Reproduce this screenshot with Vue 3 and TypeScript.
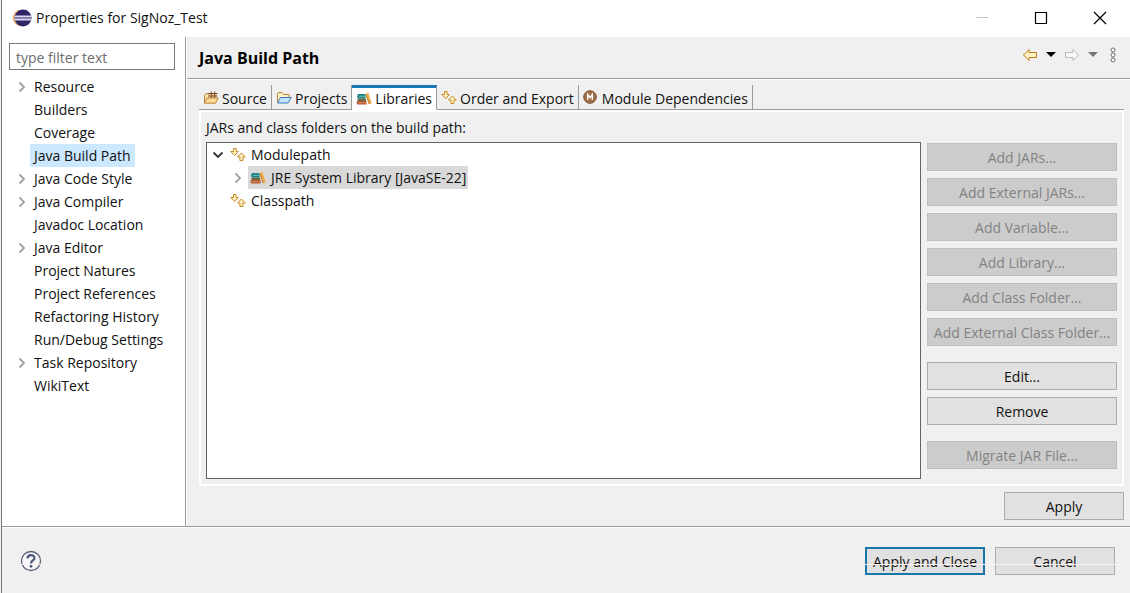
<script setup lang="ts">
import { ref } from 'vue'

interface Page { name: string; expandable?: boolean }
interface Tab { name: string; icon: string }
interface Action { label: string; disabled?: boolean; spaced?: boolean }

const pages: Page[] = [
  { name: 'Resource', expandable: true },
  { name: 'Builders' },
  { name: 'Coverage' },
  { name: 'Java Build Path' },
  { name: 'Java Code Style', expandable: true },
  { name: 'Java Compiler', expandable: true },
  { name: 'Javadoc Location' },
  { name: 'Java Editor', expandable: true },
  { name: 'Project Natures' },
  { name: 'Project References' },
  { name: 'Refactoring History' },
  { name: 'Run/Debug Settings' },
  { name: 'Task Repository', expandable: true },
  { name: 'WikiText' },
]
const tabs: Tab[] = [
  { name: 'Source', icon: 'source' },
  { name: 'Projects', icon: 'folder' },
  { name: 'Libraries', icon: 'books' },
  { name: 'Order and Export', icon: 'order' },
  { name: 'Module Dependencies', icon: 'module' },
]
const actions: Action[] = [
  { label: 'Add JARs...', disabled: true },
  { label: 'Add External JARs...', disabled: true },
  { label: 'Add Variable...', disabled: true },
  { label: 'Add Library...', disabled: true },
  { label: 'Add Class Folder...', disabled: true },
  { label: 'Add External Class Folder...', disabled: true },
  { label: 'Edit...', spaced: true },
  { label: 'Remove' },
  { label: 'Migrate JAR File...', disabled: true, spaced: true },
]
const filter = ref('')
const page = ref('Java Build Path')
const tab = ref('Libraries')
</script>

<template>
  <svg class="defs" aria-hidden="true">
    <symbol id="source" viewBox="0 0 16 16">
      <path d="M1.500 13V5.500l1.500-2h3v4" fill="#fbe6b4" stroke="#b98237" />
      <path d="M6.500 3.500h7v4h-7z" fill="#f0cfa2" />
      <path d="M8.300 1.500v6.500M11.700 1.500v6.500M5.500 3.500h9M5.500 6h9" stroke="#7d4a2e" fill="none" />
      <path d="M1.500 13.200l2.500-5.200h11.200l-2.700 5.200z" fill="#fcdc96" stroke="#bd8534" />
    </symbol>
    <symbol id="folder" viewBox="0 0 16 16">
      <path d="M1.500 12.500V4l1-1.500h3.500l1.500 2h5.500v3" fill="#fdf0c8" stroke="#b98a33" />
      <path d="M1.500 13l3-5.500h10.800l-3.300 5.500z" fill="#c4e2fa" stroke="#3f78b8" />
    </symbol>
    <symbol id="books" viewBox="0 0 16 16">
      <path d="M2 3h7.500v4.500H2l-1-2z" fill="#1d8585" />
      <path d="M3 5.300h6.500" stroke="#6cc0b4" />
      <path d="M1.500 7.500h8.500v2.500H1.500z" fill="#676b48" />
      <path d="M1 10h9.500v3.500H1.500L.500 12z" fill="#b9552f" />
      <path d="M2 11.700h8.500" stroke="#d08a60" />
      <path d="M9.500 3l2.800-1.500 3.500 10.800-2.800 1.200z" fill="#f0b050" />
      <path d="M10 3.500l3.200 9.500" stroke="#b97a30" />
    </symbol>
    <symbol id="order" viewBox="0 0 16 16">
      <path d="M3.500 1.500h2.600v3h2.200L4.800 8.500.700 4.500h2.800z" fill="#fff3c4" stroke="#c58a24" />
      <path d="M9.900 13.500h3v-3.500h2.400L11.400 6 7.600 10h2.300z" fill="#fff3c4" stroke="#c58a24" />
    </symbol>
    <symbol id="module" viewBox="0 0 16 16">
      <circle cx="7" cy="7" r="6.300" fill="#a07048" stroke="#80502c" />
      <path d="M4.700 9.700V4.500L7 7.500l2.300-3v5.200" fill="none" stroke="#fff" stroke-width="1.400" />
    </symbol>
    <symbol id="arrow" viewBox="0 0 16 14">
      <path d="M1.500 7L7 1.500v3h7.500v5H7v3z" />
    </symbol>
    <symbol id="chevron" viewBox="0 0 10 12">
      <path d="M2.500 1.500L7 6l-4.500 4.500" fill="none" stroke="currentColor" stroke-width="1.800" />
    </symbol>
  </svg>

  <main class="window">
    <header class="titlebar">
      <svg class="logo" viewBox="0 0 20 18" aria-hidden="true">
        <circle cx="9" cy="9" r="8.300" fill="#f2b070" />
        <circle cx="11" cy="9" r="8.500" fill="#2f2568" />
        <path d="M2.500 7.300h17M2.500 10.500h17" stroke="#dedcec" stroke-width="1.800" />
        <path d="M2.500 8.900h17" stroke="#8b86b5" stroke-width="1.400" />
      </svg>
      <h1>Properties for SigNoz_Test</h1>
      <div class="caption">
        <button aria-label="Minimize" disabled><svg viewBox="0 0 14 14"><path d="M1 6.500h12" stroke="#c4c4c4" /></svg></button>
        <button aria-label="Maximize"><svg viewBox="0 0 14 14"><path d="M1.500 1.500h11v11h-11z" fill="none" stroke="#000" stroke-width="1.200" /></svg></button>
        <button aria-label="Close"><svg viewBox="0 0 14 14"><path d="M1 1l12 12M13 1L1 13" stroke="#000" stroke-width="1.200" /></svg></button>
      </div>
    </header>

    <div class="body">
      <aside class="sidebar">
        <input v-model="filter" type="text" placeholder="type filter text" aria-label="Filter" />
        <ul class="pages">
          <li v-for="p in pages" :key="p.name">
            <span class="twisty"><svg v-if="p.expandable"><use href="#chevron" /></svg></span>
            <button :class="{ selected: p.name === page }" @click="page = p.name">{{ p.name }}</button>
          </li>
        </ul>
      </aside>

      <section class="content">
        <header class="page-head">
          <h2>Java Build Path</h2>
          <div class="history">
            <button aria-label="Back"><svg class="arrow back"><use href="#arrow" /></svg></button>
            <button aria-label="Back history"><svg class="caret" viewBox="0 0 10 5"><path d="M0 0h10L5 5z" /></svg></button>
            <button aria-label="Forward"><svg class="arrow forward"><use href="#arrow" /></svg></button>
            <button aria-label="Forward history"><svg class="caret dim" viewBox="0 0 10 5"><path d="M0 0h10L5 5z" /></svg></button>
            <button aria-label="Menu"><svg class="dots" viewBox="0 0 6 16"><g fill="#fff" stroke="#6c6c6c"><circle cx="3" cy="3" r="2" /><circle cx="3" cy="8" r="2" /><circle cx="3" cy="13" r="2" /></g></svg></button>
          </div>
        </header>

        <div class="tabs" role="tablist">
          <button v-for="t in tabs" :key="t.name" role="tab" :aria-selected="t.name === tab" :class="{ active: t.name === tab }" @click="tab = t.name">
            <svg class="icon"><use :href="'#' + t.icon" /></svg>{{ t.name }}
          </button>
          <span class="rest"></span>
        </div>

        <div class="panel">
          <p>JARs and class folders on the build path:</p>
          <div class="columns">
            <ul class="tree">
              <li>
                <span class="twisty open"><svg><use href="#chevron" /></svg></span>
                <button><svg class="icon"><use href="#order" /></svg>Modulepath</button>
              </li>
              <li class="child">
                <span class="twisty"><svg><use href="#chevron" /></svg></span>
                <button class="selected"><svg class="icon"><use href="#books" /></svg>JRE System Library [JavaSE-22]</button>
              </li>
              <li>
                <span class="twisty"></span>
                <button><svg class="icon"><use href="#order" /></svg>Classpath</button>
              </li>
            </ul>
            <div class="actions">
              <button v-for="a in actions" :key="a.label" class="push" :class="{ spaced: a.spaced }" :disabled="a.disabled">{{ a.label }}</button>
            </div>
          </div>
        </div>

        <div class="apply"><button class="push fixed">Apply</button></div>
      </section>
    </div>

    <footer class="footer">
      <button class="help" aria-label="Help">
        <svg viewBox="0 0 22 22">
          <circle cx="11" cy="11" r="9.500" fill="#f7f7f9" stroke="#5c6478" stroke-width="1.300" />
          <path d="M7.500 8.500C7.500 4 14.500 4 14.500 8c0 2.500-3.500 2.500-3.500 5.500" fill="none" stroke="#4c5878" stroke-width="2.200" />
          <circle cx="11" cy="16.300" r="1.400" fill="#4c5878" />
        </svg>
      </button>
      <button class="push fixed default">Apply and Close</button>
      <button class="push fixed">Cancel</button>
    </footer>
  </main>
</template>

<style>
body { margin: 0; background: #f0f0f0; }
</style>

<style scoped>
* { box-sizing: border-box; }
.defs { position: absolute; width: 0; height: 0; }
.window {
  min-height: 100vh;
  display: flex;
  flex-direction: column;
  margin-left: 1px;
  border-left: 1px solid #777;
  background: #f0f0f0;
  color: #111;
  font: 14px/23px "Open Sans", "Noto Sans", sans-serif;
}
button { margin: 0; padding: 0; border: 0; background: none; font: inherit; color: inherit; white-space: nowrap; }
ul, h1, h2, p { margin: 0; padding: 0; list-style: none; font: inherit; }
svg { display: block; }

.titlebar { display: flex; align-items: center; height: 37px; padding: 0 1px 2px 10px; background: #fff; }
.logo { width: 20px; height: 18px; margin-right: 4px; }
.caption { display: flex; margin-left: auto; }
.caption button { display: grid; place-items: center; width: 59px; height: 35px; }
.caption svg { width: 14px; height: 14px; }

.body { flex: 1; display: flex; }
.sidebar { width: 184px; padding: 6px 10px 0 7px; background: #fff; border-right: 1px solid #999; }
.sidebar input {
  display: block; width: 100%; height: 27px; padding: 1px 6px 0;
  border: 1px solid #777; border-radius: 0; background: #fff; font: inherit; outline: 0;
}
.sidebar input::placeholder { color: #6d6d6d; opacity: 1; }
.pages { padding-top: 5px; }
.pages li, .tree li { display: flex; height: 23px; align-items: center; }
.twisty { width: 21px; padding-left: 8px; color: #a0a0a0; flex: none; }
.twisty svg { width: 10px; height: 12px; }
.pages button { height: 23px; padding: 0 4px; }
.pages .selected { background: #cce8ff; }

.content { flex: 1; min-width: 0; display: flex; flex-direction: column; border-left: 1px solid #fff; }
.page-head {
  display: flex; align-items: center; justify-content: space-between; height: 42px;
  padding: 2px 14px 0 12px; border-bottom: 1px solid #999; box-shadow: 0 1px #fff;
}
.page-head h2 { font-size: 16px; font-weight: 700; color: #000; }
.history { display: flex; align-items: center; gap: 8px; padding-bottom: 8px; }
.arrow { width: 16px; height: 14px; }
.back { fill: #fff3c4; stroke: #c07d1c; }
.forward { fill: #f8f8f8; stroke: #b8b8b8; transform: scaleX(-1); }
.caret { width: 10px; height: 5px; }
.dim { fill: #777; }
.dots { width: 6px; height: 16px; margin-left: 4px; }

.tabs { display: flex; margin: 6px 6px 0 12px; height: 25px; }
.tabs button {
  display: flex; align-items: center; gap: 3px; padding: 2px 4px 0 4px;
  border-right: 1px solid #999; border-bottom: 1px solid #999;
}
.tabs .active { background: #fff; border-top: 3px solid #1b76b8; border-bottom-color: #fff; padding-top: 0; }
.rest { flex: 1; border-bottom: 1px solid #999; }
.icon { width: 16px; height: 16px; flex: none; }

.panel {
  flex: 1; display: flex; flex-direction: column; margin: 0 6px 0 12px; padding: 4px 5px 5px;
  border: 2px solid #fff;
}
.columns { flex: 1; display: flex; gap: 6px; padding-top: 3px; }
.tree { flex: 1; background: #fff; border: 1px solid #646464; }
.tree .twisty { width: 21px; padding-left: 6px; }
.tree .open { color: #333; }
.tree .open svg { transform: rotate(90deg); }
.tree .child { padding-left: 20px; }
.tree button { display: flex; align-items: center; gap: 5px; height: 23px; padding: 0 2px; }
.tree .selected { background: #d9d9d9; }
.actions { width: 190px; display: flex; flex-direction: column; gap: 7px; padding-top: 1px; }
.push { height: 28px; border: 1px solid #adadad; background: #e1e1e1; text-align: center; }
.push:disabled { background: #ccc; border-color: #bfbfbf; color: #838383; }
.spaced { margin-top: 9px; }
.fixed { width: 120px; }
.apply { display: flex; justify-content: flex-end; padding: 6px 6px 6px 0; }

.footer {
  position: relative; display: flex; align-items: center; gap: 10px; height: 67px;
  padding: 2px 15px 0 18px; border-top: 1px solid #999; box-shadow: inset 0 1px #fff;
}
.footer::after {
  content: ""; position: absolute; left: 0; right: 0; top: 37px; height: 1px; background: #fff0f0; pointer-events: none;
}
.help { margin-right: auto; }
.help svg { width: 22px; height: 22px; }
.default { border: 2px solid #1976a8; }
</style>
